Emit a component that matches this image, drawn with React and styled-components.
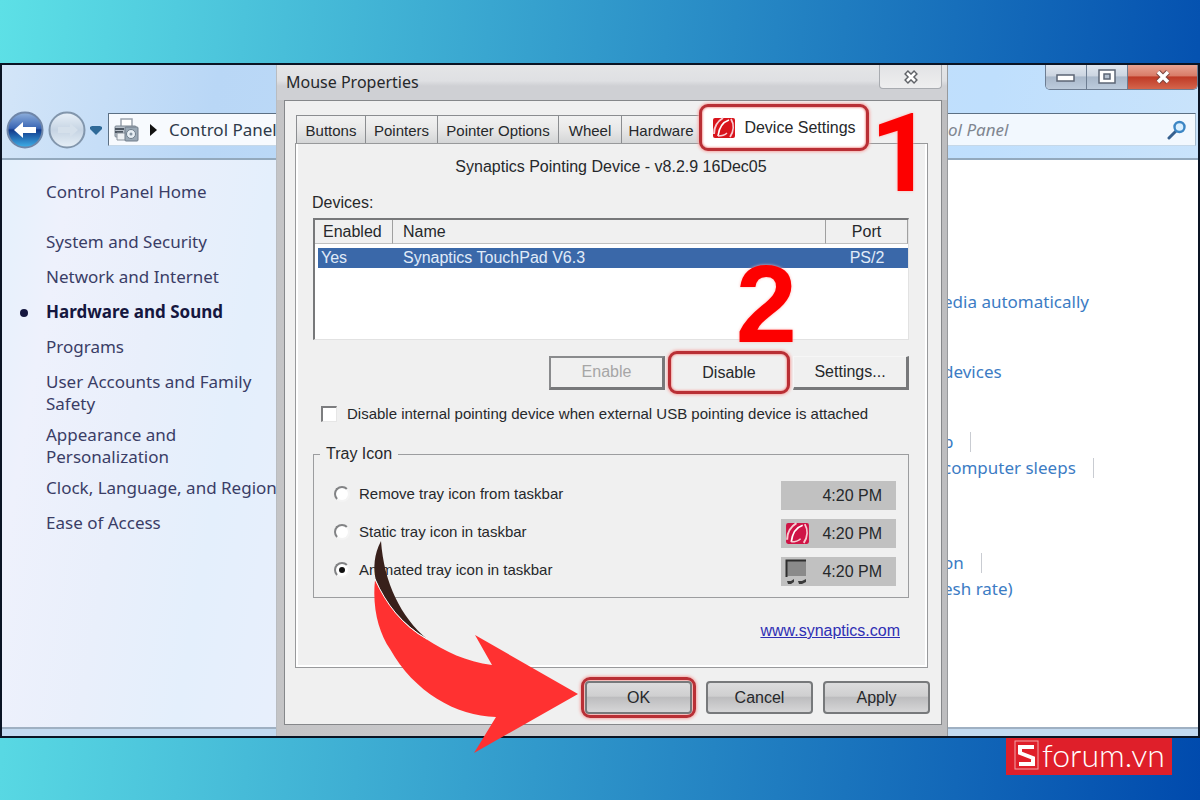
import React, { useState } from 'react';
import styled, { createGlobalStyle, css } from 'styled-components';

const GlobalStyle = createGlobalStyle`
  * {
    box-sizing: border-box;
  }

  body {
    margin: 0;
  }

  button, input {
    font-family: inherit;
  }
`;

const segoe = "'Noto Sans', 'Open Sans', sans-serif";
const msSans = "'Liberation Sans', Arial, sans-serif";

const Page = styled.div`
  position: relative;
  display: flex;
  flex-direction: column;
  min-height: 100vh;
  padding-top: 63px;
  overflow: hidden;
  background: linear-gradient(95deg, #5de0e6, #004aad);
`;

const Explorer = styled.div`
  flex: 1;
  display: flex;
  flex-direction: column;
  border: 2px solid #0a1424;
  overflow: hidden;
  background: #c3daf0;
  font-family: ${segoe};
  font-size: 17px;
  line-height: 22px;
`;

const ExplorerHeader = styled.header`
  display: flex;
  flex-direction: column;
  gap: 23px;
  padding-bottom: 12px;
  border-bottom: 2px solid #93a9bd;
  background: linear-gradient(100deg, #d3e5f8 0%, #b9d7f6 18%, #c3dffb 60%, #bfdffd 82%, #c9e3fb 100%);
`;

const WindowControls = styled.div`
  align-self: flex-end;
  display: flex;
  border: 1px solid #6d7d92;
  border-top: none;
  border-radius: 0 0 5px 5px;
  overflow: hidden;
`;

const WindowButton = styled.button`
  display: grid;
  place-items: center;
  width: ${(props) => (props.$close ? '69px' : '41px')};
  height: 24px;
  padding: 0;
  border: none;
  border-right: ${(props) => (props.$close ? 'none' : '1px solid #6d7d92')};
  background: ${(props) =>
    props.$close
      ? 'linear-gradient(#e8a493 0%, #d97c68 45%, #bf3a26 50%, #d4654c 100%)'
      : 'linear-gradient(#dfe6ef 0%, #ccd5e1 45%, #a9b8ca 50%, #bccbdc 100%)'};
`;

const NavRow = styled.div`
  display: flex;
  align-items: center;
  height: 33px;
  padding: 0 2px 0 4px;
`;

const NavButton = styled.button`
  flex: none;
  padding: 0;
  border: none;
  background: none;
  line-height: 0;
`;

const AddressBar = styled.div`
  flex: 1;
  display: flex;
  align-items: center;
  gap: 11px;
  height: 33px;
  margin-left: 4px;
  padding-left: 4px;
  border: 1px solid #5c7084;
  border-right-color: #a4bacd;
  border-bottom-color: #c6d8e8;
  background: #f7fafe;
  color: #2f3a4a;
`;

const SearchBox = styled.label`
  flex: none;
  display: flex;
  align-items: center;
  width: 258px;
  height: 33px;
  padding-right: 8px;
  border: 1px solid #5c7084;
  border-right-color: #a4bacd;
  border-bottom-color: #c6d8e8;
  background: #f2f8fe;

  input {
    flex: 1;
    min-width: 0;
    padding: 0 0 0 9px;
    border: none;
    outline: none;
    background: transparent;
    font-size: 17px;
    font-style: italic;
  }

  input::placeholder {
    color: #808690;
    opacity: 1;
  }
`;

const ExplorerBody = styled.div`
  flex: 1;
  display: flex;
  margin-bottom: 7px;
  border-bottom: 2px solid #9fb0c2;
  background: #fff;
`;

const Sidebar = styled.nav`
  flex: none;
  width: 290px;
  padding: 21px 0 0 44px;
  background: linear-gradient(100deg, #e4f1fc 0%, #eef1fc 18%, #e9effb 45%, #e4effc 70%, #e8effc 100%);
`;

const SideLink = styled.a`
  position: relative;
  display: block;
  width: ${(props) => (props.$narrow ? '160px' : '236px')};
  margin-bottom: ${(props) => props.$after || '13px'};
  color: ${(props) => (props.$current ? '#15173f' : '#3a3d66')};
  font-size: 17px;
  font-weight: ${(props) => (props.$current ? 700 : 400)};
  text-decoration: none;

  ${(props) =>
    props.$current &&
    css`
      &::before {
        content: '';
        position: absolute;
        top: 8px;
        left: -26px;
        width: 8px;
        height: 8px;
        border-radius: 50%;
        background: #15173f;
      }
    `}
`;

const Tasks = styled.div`
  flex: 1;
  display: flex;
  flex-direction: column;
  align-items: flex-end;
  padding-top: 131px;
`;

const TaskGroup = styled.div`
  display: flex;
  flex-direction: column;
  gap: 4px;
  width: 255px;
  margin-bottom: ${(props) => props.$after || '48px'};
`;

const TaskLine = styled.div`
  display: flex;
  align-items: center;
  gap: 17px;
  white-space: nowrap;

  a {
    color: #3c7cc4;
    font-size: 17px;
    text-decoration: none;
  }
`;

const Divider = styled.span`
  width: 1px;
  height: 20px;
  background: #c9ccd2;
`;

const Dialog = styled.section`
  position: absolute;
  top: 65px;
  left: 276px;
  right: 252px;
  padding: 0 5px 11px 7px;
  border-left: 1px solid #b9bcc0;
  border-right: 1px solid #97999c;
  background: linear-gradient(90deg, #c4c4c6 0%, #cdcdd0 50%, #bdbdbf 100%);
  color: #26282b;
  font-family: ${msSans};
  font-size: 16px;
  line-height: 22px;
`;

const TitleBar = styled.header`
  display: flex;
  justify-content: space-between;
  align-items: flex-start;
  height: 35px;
  margin: 0 -5px 0 -7px;
  padding-left: 9px;
  background: linear-gradient(#e4e5e7 0%, #dfe0e3 45%, #cfd0d4 60%, #cfd0d4 100%);

  h1 {
    margin: 0;
    padding-top: 6px;
    font-family: ${segoe};
    font-size: 16px;
    font-weight: 400;
    line-height: 22px;
  }
`;

const TitleClose = styled.button`
  display: grid;
  place-items: center;
  width: 63px;
  height: 24px;
  margin-right: 5px;
  padding: 0;
  border: 1px solid #a8abb0;
  border-top: none;
  border-radius: 0 0 4px 4px;
  background: linear-gradient(#e2e3e5, #eeeeef);
`;

const Client = styled.div`
  padding: 14px 13px 5px 10px;
  border: 1px solid #85878a;
  background: #f0f0f0;
`;

const TabList = styled.div`
  display: flex;
  align-items: flex-end;
  height: 28px;
  padding-left: 1px;
`;

const Tab = styled.button`
  flex: none;
  width: ${(props) => props.$width}px;
  height: 28px;
  padding: 2px 0 0;
  border: 1px solid #8b8d90;
  border-bottom: none;
  border-left-width: ${(props) => (props.$first ? '1px' : '0')};
  background: linear-gradient(#f2f2f2, #e8e8e8 50%, #d4d5d6);
  color: inherit;
  font-size: ${(props) => props.theme.tabSize || '15px'};
  white-space: nowrap;
`;

const redFrame = css`
  border: 3px solid #b92f35;
  border-radius: 9px;
  box-shadow: 0 0 3px 1px #f6a7a4, inset 0 0 2px 1px #f6a7a4;
`;

const ActiveTab = styled.button`
  position: relative;
  flex: none;
  display: flex;
  align-items: center;
  justify-content: center;
  gap: 8px;
  width: 170px;
  height: 47px;
  margin: 0 0 -8px -2px;
  padding: 0;
  background: #fff;
  color: inherit;
  font-size: 16px;
  white-space: nowrap;
  ${redFrame}
`;

const TabPanel = styled.div`
  padding: 12px 18px 25px 17px;
  border: 1px solid #98999b;
  box-shadow: inset 2px 0 #fff, inset -2px 0 #fff, inset 0 -2px #fff;
`;

const DriverName = styled.p`
  margin: 0 0 14px;
  text-align: center;
`;

const ListLabel = styled.h2`
  margin: 0 0 4px -1px;
  font-size: 16px;
  font-weight: 400;
`;

const ListBox = styled.div`
  height: 122px;
  border: 2px solid #77787a;
  border-right: 1px solid #e2e2e2;
  border-bottom: 1px solid #e2e2e2;
  background: #fff;
`;

const DeviceTable = styled.table`
  width: 100%;
  border-collapse: separate;
  border-spacing: 0;
  line-height: 20px;

  th {
    height: 24px;
    padding: 1px 10px 0;
    border-right: 1px solid #a0a0a0;
    border-bottom: 1px solid #c0c0c0;
    background: #f0f0f0;
    font-weight: 400;
    text-align: left;
  }

  td {
    height: 24px;
    padding: 0 10px;
    border-top: 4px solid #fff;
    background: #3a68a9;
    background-clip: padding-box;
    color: #e0ebf8;
  }

  th:first-child {
    width: 78px;
    padding: 1px 0 0 8px;
  }

  td:first-child {
    padding: 0 0 0 3px;
    border-left: 3px solid #fff;
  }

  th:last-child,
  td:last-child {
    width: 82px;
    padding-left: 0;
    padding-right: 0;
    text-align: center;
  }
`;

const ActionRow = styled.div`
  display: flex;
  justify-content: flex-end;
  align-items: center;
  gap: 3px;
  height: 43px;
  margin-top: 11px;
`;

const ClassicButton = styled.button`
  width: 116px;
  height: 34px;
  padding: 0;
  border: ${(props) => (props.$outlined ? '2px' : '1px')} solid ${(props) => (props.$outlined ? '#8a8b8d' : '#f6f6f6')};
  border-right: 3px solid #77787a;
  border-bottom: 3px solid #77787a;
  background: #f0f0f0;
  color: inherit;
  font-size: 16px;

  &:disabled {
    color: #a6a6a6;
  }
`;

const MarkedButton = styled.button`
  width: 122px;
  height: 43px;
  padding: 0;
  background: #f0f0f0;
  color: inherit;
  font-size: 16px;
  ${redFrame}
`;

const CheckLabel = styled.label`
  display: flex;
  align-items: center;
  gap: 10px;
  margin: 9px 0 0 8px;
  font-size: 15px;
  white-space: nowrap;
`;

const Check = styled.input`
  appearance: none;
  flex: none;
  width: 16px;
  height: 16px;
  margin: 0;
  border: 2px solid #7c7d7f;
  border-right: 1px solid #e6e6e6;
  border-bottom: 1px solid #e6e6e6;
  background: #fff;

  &:checked {
    background: #3a68a9;
  }
`;

const Group = styled.fieldset`
  display: flex;
  flex-direction: column;
  gap: 9px;
  min-width: 0;
  margin: 18px 0 22px;
  padding: 16px 12px 11px 20px;
  border: 1px solid #9c9d9f;

  legend {
    margin-left: -14px;
    padding: 0 6px;
  }
`;

const TrayRow = styled.div`
  display: flex;
  align-items: center;
  justify-content: space-between;
  height: 29px;

  label {
    display: flex;
    align-items: center;
    gap: 9px;
    padding-bottom: 4px;
    font-size: 15px;
  }
`;

const Radio = styled.input`
  appearance: none;
  flex: none;
  display: grid;
  place-items: center;
  width: 16px;
  height: 16px;
  margin: 0;
  border: 2px solid;
  border-color: #828385 #f4f4f4 #f4f4f4 #828385;
  border-radius: 50%;
  background: #fff;

  &:checked::before {
    content: '';
    width: 6px;
    height: 6px;
    border-radius: 50%;
    background: #111;
  }
`;

const TrayPreview = styled.div`
  display: flex;
  align-items: center;
  justify-content: space-between;
  width: 115px;
  height: 29px;
  padding: 0 14px 0 4px;
  background: #c1c1c1;

  time {
    margin-left: auto;
  }
`;

const SiteLink = styled.a`
  display: block;
  width: fit-content;
  margin: 0 9px 0 auto;
  color: #2f2fb4;
`;

const DialogFooter = styled.footer`
  display: flex;
  justify-content: flex-end;
  align-items: center;
  gap: 10px;
  height: 43px;
  margin: 8px -2px 0 0;
`;

const PushButton = styled.button`
  width: 107px;
  height: 33px;
  padding: 0;
  border: 2px solid #77797b;
  border-radius: 4px;
  background: linear-gradient(#dcdcdd 0%, #cfcfd0 45%, #bdbdbf 50%, #d6d6d7 100%);
  color: inherit;
  font-size: 16px;
`;

const RedRing = styled.span`
  display: flex;
  padding: 1px;
  ${redFrame}
`;

const StepNumber = styled.span`
  position: absolute;
  top: ${(props) => props.$top}px;
  right: ${(props) => props.$right}px;
  color: #fd0000;
  font-family: ${(props) => props.$family};
  font-size: 110px;
  font-weight: 700;
  line-height: 110px;
  text-shadow: 0 0 3px #ffb3b0;
  pointer-events: none;
`;

const Arrow = styled.svg`
  position: absolute;
  top: 473px;
  left: 93px;
  pointer-events: none;
`;

const Brand = styled.a`
  align-self: flex-end;
  display: flex;
  align-items: center;
  gap: 3px;
  width: 166px;
  height: 37px;
  margin: 0 28px 25px 0;
  padding: 0 0 3px 8px;
  background: #df1f2a;
  color: #fff;
  font-family: Lato, 'Open Sans', sans-serif;
  font-size: 32px;
  font-weight: 300;
  line-height: 34px;
  text-decoration: none;
`;

const BackIcon = () => (
  <svg width="38" height="40" viewBox="0 0 38 40">
    <defs>
      <linearGradient id="orb" x1="0" y1="0" x2="0" y2="1">
        <stop offset="0" stopColor="#8fb0dc" />
        <stop offset="0.45" stopColor="#3a66b4" />
        <stop offset="0.5" stopColor="#123a8c" />
        <stop offset="1" stopColor="#3fb2ea" />
      </linearGradient>
    </defs>
    <circle cx="19" cy="20" r="17.5" fill="url(#orb)" stroke="#6f86a8" strokeWidth="2" />
    <path d="M8 20l9-8v5h13v6H17v5z" fill="#fff" />
  </svg>
);

const ForwardIcon = () => (
  <svg width="44" height="40" viewBox="0 0 44 40">
    <defs>
      <linearGradient id="pale" x1="0" y1="0" x2="0" y2="1">
        <stop offset="0" stopColor="#e9f1f9" />
        <stop offset="0.5" stopColor="#c6d4e3" />
        <stop offset="1" stopColor="#e6eff7" />
      </linearGradient>
    </defs>
    <circle cx="23" cy="20" r="17.5" fill="url(#pale)" stroke="#8296ac" strokeWidth="2" />
    <path d="M34 20l-8-7v4H14v6h12v4z" fill="#d5e0eb" />
  </svg>
);

const PrinterIcon = () => (
  <svg width="26" height="26" viewBox="0 0 26 26">
    <path d="M8 9V2h11v7" fill="#fff" stroke="#9aa3ad" strokeWidth="1.5" />
    <rect x="2" y="9" width="21" height="11" rx="1" fill="#b9c1ca" stroke="#7d8893" />
    <path d="M2 12h9M2 15h8" stroke="#4d5661" strokeWidth="2" />
    <path d="M4 16h9v7H4z" fill="#eef1f4" stroke="#8b949e" />
    <rect x="12" y="10" width="13" height="14" rx="1" fill="#9aa8b5" stroke="#707d8a" />
    <circle cx="18" cy="17" r="4.5" fill="#e7eef4" stroke="#6f7e8c" />
    <circle cx="18" cy="17" r="1.5" fill="#8594a2" />
  </svg>
);

const SearchIcon = () => (
  <svg width="20" height="20" viewBox="0 0 20 20" fill="none">
    <path d="M9 11l-7 7" stroke="#36608f" strokeWidth="3" strokeLinecap="round" />
    <circle cx="12.5" cy="7" r="5" fill="#d9efff" stroke="#3c86c4" strokeWidth="2.4" />
  </svg>
);

const SynapticsIcon = ({ color, size = 24 }) => (
  <svg width={size} height={size} viewBox="0 0 24 24">
    <rect x="1" y="2" width="22" height="20" rx="2" fill={color} />
    <path d="M11 2C6 5 2 11 2 18" fill="none" stroke="#f8ccd2" strokeWidth="2" />
    <path d="M17 4C11 6 7 12 6 20" fill="none" stroke="#fff" strokeWidth="1.6" />
    <path d="M6 20c4 0 7-1 9-3" fill="none" stroke="#f8ccd2" strokeWidth="1.4" />
    <path d="M19 3c3 5 3 12-1 18" fill="none" stroke="#f8ccd2" strokeWidth="1.8" />
  </svg>
);

const TouchpadIcon = () => (
  <svg width="24" height="26" viewBox="0 0 24 26">
    <path d="M1 1h20v16H1z" fill="#8a8a8a" />
    <path d="M1.5 18V1.5H21" fill="none" stroke="#2e2e2e" strokeWidth="2" />
    <path d="M2 22h4l3-2v3l-3 2H3zM13 22h4l4-2v3l-4 2h-3z" fill="#3b3b3b" />
  </svg>
);

const BrandMark = () => (
  <svg width="25" height="30" viewBox="0 0 25 30" fill="none">
    <rect x="1" y="1" width="23" height="28" stroke="#f3a3a6" />
    <path d="M20 7H6v6l13 5v6H5" stroke="#fff" strokeWidth="4" />
  </svg>
);

const tabs = [
  { name: 'Buttons', width: 70 },
  { name: 'Pointers', width: 72 },
  { name: 'Pointer Options', width: 121 },
  { name: 'Wheel', width: 63 },
  { name: 'Hardware', width: 79 },
];

const trayOptions = [
  { id: 'remove', label: 'Remove tray icon from taskbar' },
  { id: 'static', label: 'Static tray icon in taskbar', icon: <SynapticsIcon color="#cf1446" size={25} /> },
  { id: 'animated', label: 'Animated tray icon in taskbar', icon: <TouchpadIcon /> },
];

const ControlPanel = () => (
  <Explorer>
    <ExplorerHeader>
      <WindowControls>
        <WindowButton aria-label="Minimize">
          <svg width="20" height="10" viewBox="0 0 20 10">
            <rect x="1" y="3" width="17" height="6" fill="#fff" stroke="#5c6675" strokeWidth="1.5" />
          </svg>
        </WindowButton>
        <WindowButton aria-label="Maximize">
          <svg width="18" height="16" viewBox="0 0 18 16">
            <rect x="1" y="1" width="16" height="13" fill="#fff" stroke="#5c6675" strokeWidth="1.5" />
            <rect x="6" y="5" width="6" height="5" fill="#b4c0cf" stroke="#5c6675" strokeWidth="1.5" />
          </svg>
        </WindowButton>
        <WindowButton $close aria-label="Close">
          <svg width="18" height="16" viewBox="0 0 18 16">
            <path d="M4 3l10 10M14 3L4 13" stroke="#7b4640" strokeWidth="5.5" />
            <path d="M4 3l10 10M14 3L4 13" stroke="#fff" strokeWidth="3.5" />
          </svg>
        </WindowButton>
      </WindowControls>
      <NavRow>
        <NavButton aria-label="Back">
          <BackIcon />
        </NavButton>
        <NavButton aria-label="Forward">
          <ForwardIcon />
        </NavButton>
        <NavButton aria-label="Recent pages">
          <svg width="16" height="12" viewBox="0 0 16 12">
            <path d="M2 3l2-1h8l2 1v2l-6 6-6-6z" fill="#2f6a98" />
          </svg>
        </NavButton>
        <AddressBar>
          <PrinterIcon />
          <svg width="8" height="12" viewBox="0 0 8 12">
            <path d="M0 0l7 6-7 6z" fill="#111" />
          </svg>
          <span>Control Panel</span>
        </AddressBar>
        <SearchBox>
          <input type="text" placeholder="ol Panel" aria-label="Search" />
          <SearchIcon />
        </SearchBox>
      </NavRow>
    </ExplorerHeader>
    <ExplorerBody>
      <Sidebar>
        <SideLink href="#home" $after="28px">Control Panel Home</SideLink>
        <SideLink href="#system">System and Security</SideLink>
        <SideLink href="#network">Network and Internet</SideLink>
        <SideLink href="#hardware" $current>Hardware and Sound</SideLink>
        <SideLink href="#programs">Programs</SideLink>
        <SideLink href="#users" $after="9px">User Accounts and Family Safety</SideLink>
        <SideLink href="#appearance" $after="9px" $narrow>Appearance and Personalization</SideLink>
        <SideLink href="#clock">Clock, Language, and Region</SideLink>
        <SideLink href="#access">Ease of Access</SideLink>
      </Sidebar>
      <Tasks>
        <TaskGroup>
          <TaskLine><a href="#autoplay">edia automatically</a></TaskLine>
        </TaskGroup>
        <TaskGroup>
          <TaskLine><a href="#audio">devices</a></TaskLine>
        </TaskGroup>
        <TaskGroup $after="73px">
          <TaskLine><a href="#power">p</a><Divider /></TaskLine>
          <TaskLine><a href="#sleep">computer sleeps</a><Divider /></TaskLine>
        </TaskGroup>
        <TaskGroup>
          <TaskLine><a href="#resolution">on</a><Divider /></TaskLine>
          <TaskLine><a href="#refresh">esh rate)</a></TaskLine>
        </TaskGroup>
      </Tasks>
    </ExplorerBody>
  </Explorer>
);

const MouseProperties = () => {
  const [tray, setTray] = useState('animated');
  const [disableInternal, setDisableInternal] = useState(false);

  return (
    <Dialog>
      <TitleBar>
        <h1>Mouse Properties</h1>
        <TitleClose aria-label="Close dialog">
          <svg width="18" height="16" viewBox="0 0 18 16">
            <path d="M4 3l10 10M14 3L4 13" stroke="#606368" strokeWidth="5.5" />
            <path d="M5 4l8 8M13 4l-8 8" stroke="#fff" strokeWidth="2.5" />
          </svg>
        </TitleClose>
      </TitleBar>
      <Client>
        <TabList role="tablist">
          {tabs.map((tab, i) => (
            <Tab key={tab.name} role="tab" $width={tab.width} $first={i === 0}>
              {tab.name}
            </Tab>
          ))}
          <ActiveTab role="tab" aria-selected="true">
            <SynapticsIcon color="#d8141c" />
            Device Settings
          </ActiveTab>
        </TabList>
        <TabPanel role="tabpanel">
          <DriverName>Synaptics Pointing Device - v8.2.9 16Dec05</DriverName>
          <ListLabel>Devices:</ListLabel>
          <ListBox>
            <DeviceTable>
              <thead>
                <tr>
                  <th>Enabled</th>
                  <th>Name</th>
                  <th>Port</th>
                </tr>
              </thead>
              <tbody>
                <tr>
                  <td>Yes</td>
                  <td>Synaptics TouchPad V6.3</td>
                  <td>PS/2</td>
                </tr>
              </tbody>
            </DeviceTable>
          </ListBox>
          <ActionRow>
            <ClassicButton $outlined disabled>Enable</ClassicButton>
            <MarkedButton>Disable</MarkedButton>
            <ClassicButton>Settings...</ClassicButton>
          </ActionRow>
          <CheckLabel>
            <Check
              type="checkbox"
              checked={disableInternal}
              onChange={(e) => setDisableInternal(e.target.checked)}
            />
            Disable internal pointing device when external USB pointing device is attached
          </CheckLabel>
          <Group>
            <legend>Tray Icon</legend>
            {trayOptions.map((option) => (
              <TrayRow key={option.id}>
                <label>
                  <Radio
                    type="radio"
                    name="tray"
                    checked={tray === option.id}
                    onChange={() => setTray(option.id)}
                  />
                  {option.label}
                </label>
                <TrayPreview>
                  {option.icon}
                  <time>4:20 PM</time>
                </TrayPreview>
              </TrayRow>
            ))}
          </Group>
          <SiteLink href="#synaptics">www.synaptics.com</SiteLink>
        </TabPanel>
        <DialogFooter>
          <RedRing>
            <PushButton>OK</PushButton>
          </RedRing>
          <PushButton>Cancel</PushButton>
          <PushButton>Apply</PushButton>
        </DialogFooter>
      </Client>
      <StepNumber $top={34} $right={14} $family="Roboto, sans-serif">1</StepNumber>
      <StepNumber $top={184} $right={150} $family="'Liberation Sans', sans-serif">2</StepNumber>
      <Arrow width="212" height="220" viewBox="0 0 212 220">
        <path
          d="M5 42C2 70 9 95 20 111C44 154 86 178 126 179L104 215L208 156L105 97L122 127C96 124 75 113 56 101C33 88 17 66 5 42Z"
          fill="#ff3131"
        />
        <path d="M11 3C4 16 3 30 6 43C16 66 32 86 57 101C31 79 14 45 11 3Z" fill="#38201b" />
        <path d="M5 41C16 66 32 87 57 101" fill="none" stroke="#fff" strokeWidth="1" />
      </Arrow>
    </Dialog>
  );
};

const App = () => (
  <Page>
    <GlobalStyle />
    <ControlPanel />
    <Brand href="#sforum">
      <BrandMark />
      forum.vn
    </Brand>
    <MouseProperties />
  </Page>
);

export default App;
